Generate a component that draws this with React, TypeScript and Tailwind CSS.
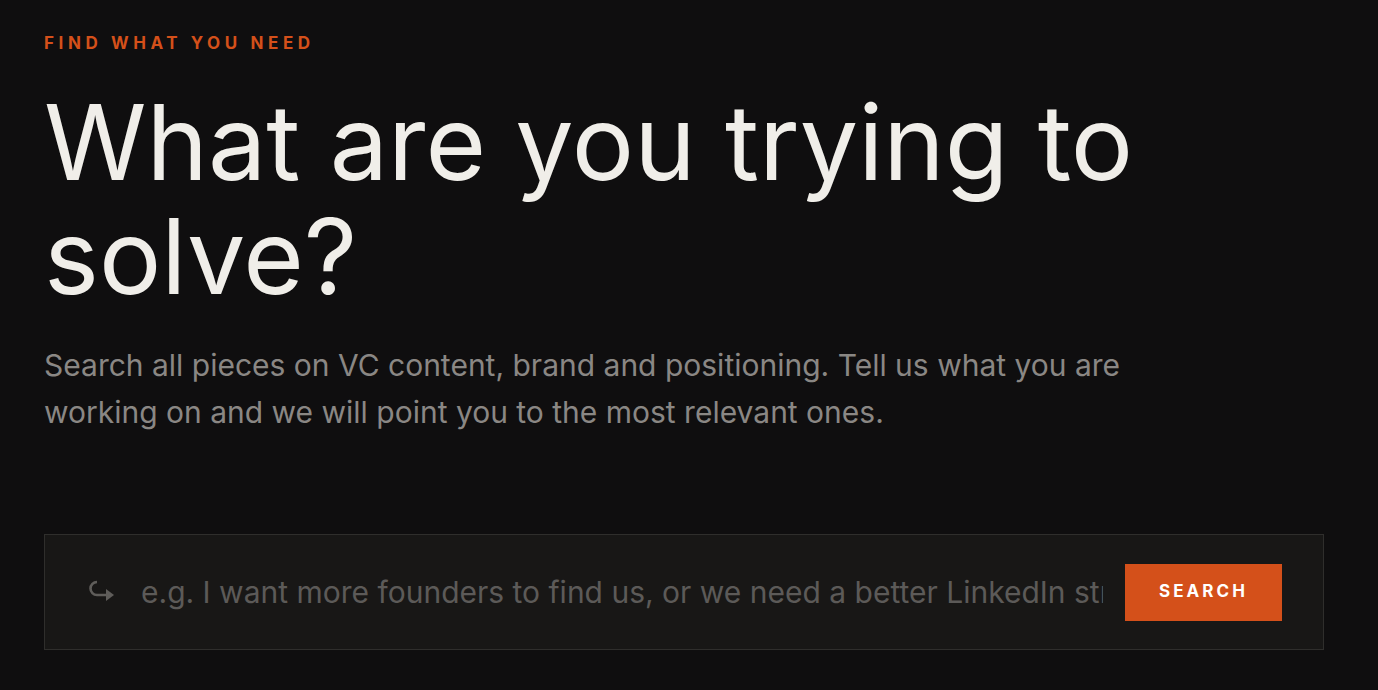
import React from "react";

export default function App() {
  return (
    <div className="min-h-[690px] w-full bg-[#0f0e0f] px-[44px] pt-[34px]" style={{ fontFamily: "Inter, 'Noto Sans', sans-serif" }}>
      <div className="text-[17px] font-bold tracking-[0.27em] text-[#d4501a] leading-[18px]">FIND WHAT YOU NEED</div>
      <h1 className="mt-[33px] text-[104px] leading-[114px] font-normal tracking-[0em] text-[#f0eee9] max-w-[1150px]">
        What are you trying to solve?
      </h1>
      <p className="mt-[29px] text-[30px] leading-[47px] text-[#8a8784] max-w-[1110px]">
        Search all pieces on VC content, brand and positioning. Tell us what you are working on and we will point you to the most relevant ones.
      </p>
      <div className="mt-[98px] flex h-[116px] w-[1280px] items-center border border-[#2f2e2c] bg-[#181716] pl-[43px] pr-[41px]">
        <svg width="28" height="24" viewBox="0 0 28 24" fill="none" className="shrink-0">
          <path d="M9 2 A6.5 6.5 0 0 0 9 15 H19" stroke="#5f5d5a" strokeWidth="2.6" strokeLinecap="butt" />
          <polygon points="18,9 26,15 18,21" fill="#5f5d5a" />
        </svg>
        <input
          className="ml-[25px] min-w-0 flex-1 bg-transparent text-[30px] text-[#e0ddd8] outline-none placeholder:text-[#5c5a58]"
          placeholder="e.g. I want more founders to find us, or we need a better LinkedIn strategy"
        />
        <button className="ml-[22px] h-[57px] w-[157px] shrink-0 bg-[#d4501a] text-[17px] font-bold tracking-[0.18em] text-white">
          SEARCH
        </button>
      </div>
    </div>
  );
}
